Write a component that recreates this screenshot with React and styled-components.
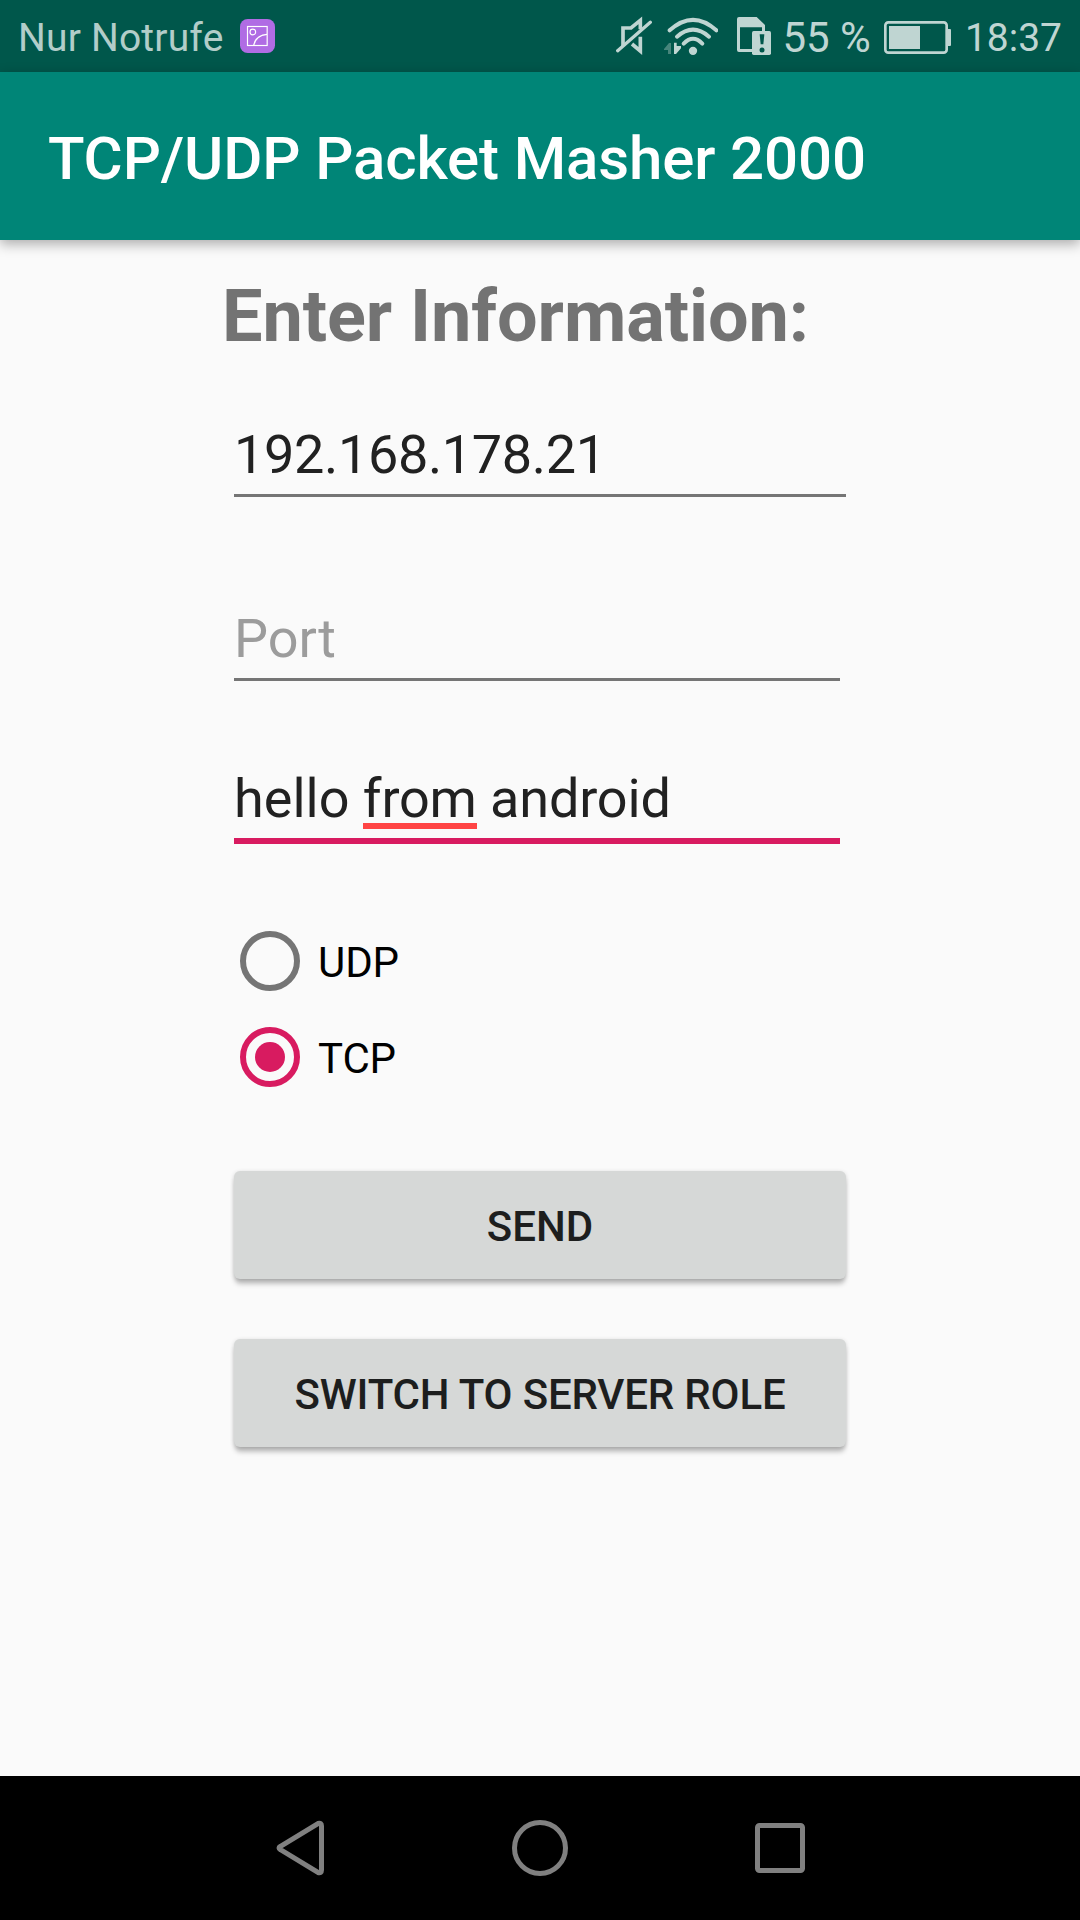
import React, { useState } from "react";
import styled, { createGlobalStyle } from "styled-components";

const GlobalStyle = createGlobalStyle`
  *, *::before, *::after { box-sizing: border-box; }
  html, body { margin: 0; padding: 0; background: #fafafa; }
  body { font-family: Roboto, "Noto Sans", sans-serif; }
`;

const Screen = styled.div`
  display: flex;
  flex-direction: column;
  width: 1080px;
  height: 1920px;
  overflow: hidden;
  background: #fafafa;
`;

const StatusBar = styled.header`
  display: flex;
  align-items: center;
  justify-content: space-between;
  height: 72px;
  padding: 0 18px;
  background: #00574b;
  color: #bfd5d2;
`;

const StatusGroup = styled.div`
  display: flex;
  align-items: center;
  height: 72px;
`;

const StatusText = styled.span`
  font-size: ${(p) => p.$size || 39}px;
  line-height: 72px;
  padding-top: 3px;
  margin-left: ${(p) => p.$gap || 0}px;
  color: ${(p) => p.$color || "#bfd5d2"};
  letter-spacing: ${(p) => p.$track || 0}px;
  white-space: nowrap;
`;

const StatusIcon = styled.svg`
  display: block;
  flex: none;
  margin-left: ${(p) => p.$gap || 0}px;
`;

const AppBar = styled.div`
  display: flex;
  align-items: center;
  height: 168px;
  padding: 6px 48px 0;
  background: #008577;
  box-shadow: 0 4px 12px rgba(0, 0, 0, 0.32);
`;

const Title = styled.h1`
  margin: 0;
  font-size: 60px;
  font-weight: 500;
  line-height: 72px;
  letter-spacing: -0.13px;
  color: #fff;
  white-space: nowrap;
`;

const Content = styled.main`
  display: flex;
  flex-direction: column;
  flex: 1;
  padding: 35px 234px 0;
`;

const Heading = styled.h2`
  margin: 0 0 64px -12px;
  font-size: 72px;
  font-weight: 700;
  line-height: 84px;
  letter-spacing: -0.06px;
  color: #737373;
  white-space: nowrap;
`;

const Field = styled.div`
  width: ${(p) => p.$width}px;
  height: ${(p) => (p.$focused ? 77 : 74)}px;
  margin-bottom: ${(p) => p.$after}px;
  border-bottom: ${(p) => (p.$focused ? "6px solid #d81b60" : "3px solid #757575")};
  font-size: 54px;
  line-height: 64px;
  letter-spacing: ${(p) => p.$track || 0}px;
  color: ${(p) => (p.$hint ? "#9c9c9c" : "#212121")};
  white-space: nowrap;
`;

const Misspelled = styled.span`
  display: inline-block;
  height: 62px;
  border-bottom: 6px solid #ff4444;
  letter-spacing: -0.2px;
  vertical-align: top;
`;

const Trailing = styled.span`
  letter-spacing: -0.15px;
`;

const RadioGroup = styled.div`
  display: flex;
  flex-direction: column;
  gap: 36px;
  margin: 0 0 84px 6px;
`;

const RadioRow = styled.div`
  display: flex;
  align-items: center;
  gap: 18px;
  height: 60px;
  cursor: pointer;
`;

const RadioRing = styled.span`
  display: flex;
  align-items: center;
  justify-content: center;
  width: 60px;
  height: 60px;
  border: 6px solid ${(p) => (p.$on ? "#d81b60" : "#757575")};
  border-radius: 50%;
`;

const RadioDot = styled.span`
  width: 30px;
  height: 30px;
  border-radius: 50%;
  background: #d81b60;
`;

const RadioLabel = styled.span`
  padding-top: 3px;
  font-size: 42px;
  line-height: 60px;
  letter-spacing: -0.1px;
  color: #000;
`;

const Buttons = styled.div`
  display: flex;
  flex-direction: column;
  gap: 60px;
`;

const Button = styled.button`
  height: 108px;
  padding: 3px 0 0;
  border: 0;
  border-radius: 6px;
  background: #d6d8d7;
  box-shadow: 0 6px 5px -1px rgba(0, 0, 0, 0.23), 0 1px 4px rgba(0, 0, 0, 0.16);
  font-family: inherit;
  font-size: 42px;
  font-weight: 500;
  letter-spacing: ${(p) => p.$track || 0}px;
  color: #1d1e1e;
  white-space: nowrap;
`;

const NavBar = styled.nav`
  display: flex;
  align-items: center;
  justify-content: center;
  gap: 184px;
  height: 144px;
  background: #000;
`;

const NavIcon = styled.svg`
  display: block;
  width: 56px;
  height: 56px;
  fill: none;
  stroke: #808080;
  stroke-width: 5;
`;

const PictureIcon = () => (
  <StatusIcon $gap={16} width="35" height="72" viewBox="720 0 105 216" fill="none" stroke="#fff">
    <rect x="720" y="57" width="105" height="102" rx="23" fill="#b06ce4" stroke="none" />
    <rect x="742.5" y="79.5" width="59" height="57" strokeWidth="3.5" />
    <circle cx="758.5" cy="96" r="8.5" strokeWidth="3.5" />
    <path d="M761 136 Q767 106 801 103" strokeWidth="4" />
  </StatusIcon>
);

const MuteIcon = () => (
  <StatusIcon width="36" height="72" viewBox="45 0 108 216" fill="none" stroke="#bfd5d2" strokeWidth="11">
    <path d="M66 138 V84 H90 L118 61 V88" />
    <path d="M118 110 V153 L93 132" />
    <path d="M50 152 L148 67" strokeLinecap="round" strokeWidth="10" />
  </StatusIcon>
);

const WifiIcon = () => (
  <StatusIcon $gap={12} width="54" height="72" viewBox="192 0 162 216" fill="none" stroke="#bfd5d2" strokeWidth="12" strokeLinecap="round">
    <path d="M209 91 Q279 28 349 91" />
    <path d="M231 110 Q279 68 327 110" />
    <path d="M251 131 Q279 102 307 131" />
    <circle cx="279" cy="152.500" r="12.500" fill="#bfd5d2" stroke="none" />
    <path d="M192 147 L207 129 H213 V162 H204 V150 H192 Z" fill="#47857b" stroke="none" />
    <path d="M222 128 H230 V138 H243 V145 L228 162 H222 Z" fill="#bfd5d2" stroke="none" />
  </StatusIcon>
);

const SimIcon = () => (
  <StatusIcon $gap={19} width="34" height="72" viewBox="411 0 102 216">
    <path
      fill="#bfd5d2"
      fillRule="evenodd"
      d="M417 51 H470 L495 75 V156 H417 Q411 156 411 150 V57 Q411 51 417 51 Z M420 82 V147 H486 V82 Z"
    />
    <rect x="456" y="93" width="57" height="72" rx="5" fill="#bfd5d2" />
    <path d="M479 103 H493 L490 133 H482 Z" fill="#00574b" />
    <circle cx="486" cy="150" r="7.500" fill="#00574b" />
  </StatusIcon>
);

const BatteryIcon = () => (
  <StatusIcon $gap={13} width="67" height="72" viewBox="132 0 201 216" fill="#bfd5d2">
    <rect x="136" y="67" width="184" height="91" rx="9" fill="none" stroke="#bfd5d2" strokeWidth="8" />
    <rect x="147" y="78" width="93" height="69" />
    <path d="M324 87 H330 Q333 87 333 90 V135 Q333 138 330 138 H324 Z" />
  </StatusIcon>
);

const protocols = ["UDP", "TCP"];

export default function App() {
  const [protocol, setProtocol] = useState("TCP");

  return (
    <>
      <GlobalStyle />
      <Screen>
        <StatusBar>
          <StatusGroup>
            <StatusText $color="#b2cdc9" $track={0.18}>Nur Notrufe</StatusText>
            <PictureIcon />
          </StatusGroup>
          <StatusGroup>
            <MuteIcon />
            <WifiIcon />
            <SimIcon />
            <StatusText $size={42} $gap={11.5}>55 %</StatusText>
            <BatteryIcon />
            <StatusText $gap={14}>18:37</StatusText>
          </StatusGroup>
        </StatusBar>
        <AppBar>
          <Title>TCP/UDP Packet Masher 2000</Title>
        </AppBar>
        <Content>
          <Heading>Enter Information:</Heading>
          <Field $width={612} $after={110} $track={-0.34}>192.168.178.21</Field>
          <Field $width={606} $after={86} $hint>Port</Field>
          <Field $width={606} $after={87} $focused>
            hello <Misspelled>from</Misspelled><Trailing> android</Trailing>
          </Field>
          <RadioGroup role="radiogroup">
            {protocols.map((name) => (
              <RadioRow
                key={name}
                role="radio"
                aria-checked={protocol === name}
                onClick={() => setProtocol(name)}
              >
                <RadioRing $on={protocol === name}>{protocol === name && <RadioDot />}</RadioRing>
                <RadioLabel>{name}</RadioLabel>
              </RadioRow>
            ))}
          </RadioGroup>
          <Buttons>
            <Button>SEND</Button>
            <Button $track={-0.17}>SWITCH TO SERVER ROLE</Button>
          </Buttons>
        </Content>
        <NavBar>
          <NavIcon viewBox="0 0 56 56">
            <path d="M8.500 26.300 L46 3.500 Q49.500 2.500 49.500 6 V50 Q49.500 53.500 46 52.500 L8.500 29.700 Q5.500 28 8.500 26.300 Z" />
          </NavIcon>
          <NavIcon viewBox="0 0 56 56">
            <circle cx="28" cy="28" r="25.500" />
          </NavIcon>
          <NavIcon viewBox="0 0 56 56">
            <rect x="5.500" y="5.500" width="45" height="45" rx="2" />
          </NavIcon>
        </NavBar>
      </Screen>
    </>
  );
}
